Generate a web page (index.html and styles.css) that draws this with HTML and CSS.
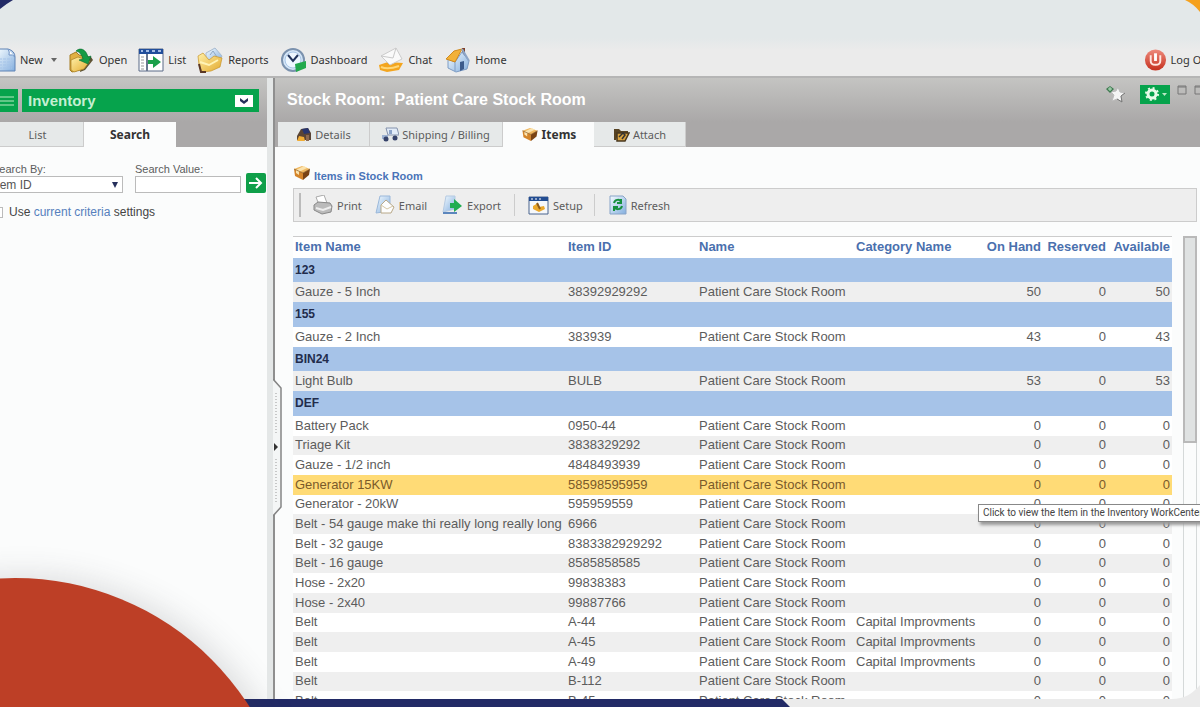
FILE: index.html
```html
<!DOCTYPE html>
<html lang="en">
<head>
<meta charset="utf-8">
<title>Inventory - Stock Room</title>
<link rel="stylesheet" href="styles.css">
</head>
<body>
<svg class="defs" width="0" height="0" aria-hidden="true">
  <defs>
    <linearGradient id="gold" x1="0" y1="0" x2="1" y2="1"><stop offset="0" stop-color="#fff0a8"/><stop offset="1" stop-color="#e3a92c"/></linearGradient>
    <linearGradient id="blue" x1="0" y1="0" x2="1" y2="1"><stop offset="0" stop-color="#f4fbff"/><stop offset="1" stop-color="#83aede"/></linearGradient>
    <linearGradient id="red" x1="0" y1="0" x2="0" y2="1"><stop offset="0" stop-color="#ee8a7c"/><stop offset="1" stop-color="#c52f1d"/></linearGradient>
    <symbol id="box" viewBox="0 0 18 16">
      <path d="M1 4 9 1l8 3-7 4z" fill="#f0b860"/><path d="M1 4l9 4v7L2 11z" fill="#d48429"/><path d="M17 4l-7 4v7l6-5z" fill="#7a4314"/>
      <path d="M11 1l3 2-8 4v3l-3-2V5z" fill="#fbe3ae"/><path d="M1 4l9 4 7-4" fill="none" stroke="#8a5a22" stroke-width=".7"/>
    </symbol>
  </defs>
</svg>
<div class="page">
  <header class="top">
    <nav class="menu">
      <button class="menu-new"><svg width="20" height="26" viewBox="0 0 20 26"><path d="M1 2h11q7 2 7 8v14H1z" fill="url(#blue)" stroke="#5f83b5"/><path d="M12 2q2 3 1 6 4-1 6 2" fill="#fff" stroke="#6f93c5"/><path d="M3 12h13M3 15h13M3 18h13M3 21h13" stroke="#a5c3e8" stroke-dasharray="3 1"/></svg>New<i class="caret"></i></button>
      <button class="wide"><svg width="25" height="26" viewBox="0 0 25 26"><path d="M13 8l9 2 2 3-8 10-5 2z" fill="#5d5335"/><path d="M1 8l6-3 3 3 4 1v13l-11 3-2-2z" fill="#e0b042" stroke="#a67d22"/><path d="M2 13l7-3 12 4-6 8-10 3-3-2z" fill="url(#gold)" stroke="#a67d22" stroke-width=".7"/><path d="M7 4c4-4 10-2 12 6l3-1-3 8-9-4 4-1c-1-4-3-7-7-8z" fill="#169b45" stroke="#0a6b30" stroke-width=".6"/></svg>Open</button>
      <button><svg width="26" height="26" viewBox="0 0 26 26"><path d="M1 2h24v22H1z" fill="#fff" stroke="#5b6a87"/><path d="M1 2h24v5H1z" fill="#214e9b"/><path d="M3 4h2m3 0h3m3 0h3m3 0h3" stroke="#cfe0fb" stroke-width="1.5"/><path d="M3 10h3m-3 3h3m-3 3h3m-3 3h3m-3 3h3" stroke="#999"/><path d="M9 7v17" stroke="#6b7890" stroke-width="2"/><path d="M10 13h5V9l8 6-8 6v-4h-5z" fill="#1ba04a"/></svg>List</button>
      <button class="wide"><svg width="26" height="26" viewBox="0 0 26 26"><path d="M9 6l9-5 7 8-3 7H9z" fill="url(#blue)" stroke="#a8bbd0"/><path d="M13 8l3-4 4 6" fill="none" stroke="#8fa7c4"/><path d="M1 9l5-3 6 7 5-4 8 2-2 9-9 4-9 1-3-7z" fill="url(#gold)" stroke="#c79429" stroke-width=".7"/><path d="M3 15l9 3 9-5" fill="none" stroke="#fff3b5" stroke-width="2"/><path d="M2 17l2 8h5" fill="none" stroke="#5b3826" stroke-width="2"/></svg>Reports</button>
      <button class="tight"><svg width="26" height="26" viewBox="0 0 26 26"><circle cx="12" cy="13" r="11" fill="#d5e6f8" stroke="#7b92ae" stroke-width="2"/><circle cx="12" cy="13" r="8" fill="#eef7ff" stroke="#a9c6e6"/><path d="M7 8l5 6 5-6" fill="none" stroke="#22345c" stroke-width="2"/><path d="M14 17l11-3v7l-10 4z" fill="#22a94d"/></svg>Dashboard</button>
      <button><svg width="26" height="26" viewBox="0 0 26 26"><path d="M1 18l9-3 15 1-4 7-12 2-7-2z" fill="#f3a51f"/><path d="M3 20q7 3 18-1" fill="none" stroke="#ffd777" stroke-width="2"/><path d="M3 9l15-8 6 11-12 6z" fill="#fafafa" stroke="#ccc"/><path d="M3 9l12 2 3-10" fill="none" stroke="#c9c9c9"/></svg>Chat</button>
      <button class="last wide"><svg width="25" height="26" viewBox="0 0 25 26"><path d="M17 1h3v8h-3z" fill="#7d3f29"/><path d="M3 12l7 3 7-10 7 9-2 8-11 3-8-4z" fill="url(#blue)" stroke="#7e9cc4"/><path d="M10 14v10" stroke="#7e9cc4"/><path d="M1 12L9 4l8-2-7 13z" fill="#f2b138" stroke="#d08a1e"/><path d="M17 2l7 12" stroke="#8da6c8" stroke-width="2"/><path d="M15 15l4-1v8l-4 2z" fill="#3b5a8b"/></svg>Home</button>
      <button class="logout"><svg width="23" height="24" viewBox="0 0 24 24"><circle cx="12" cy="12" r="11" fill="url(#red)"/><path d="M7 7v6q0 4 5 4t5-4V7" fill="none" stroke="#ffe6e0" stroke-width="2"/><path d="M12 5v8" stroke="#fff" stroke-width="3"/></svg>Log Out</button>
    </nav>
  </header>

  <main class="work">
    <aside class="side">
      <div class="side-head">
        <button class="burger" aria-label="Menu"><svg width="14" height="12" viewBox="0 0 14 12"><path d="M0 2h14M0 6h14M0 10h14" stroke="#7fd39b" stroke-width="1.5"/></svg></button>
        <button class="module">Inventory<svg width="18" height="12" viewBox="0 0 18 12"><path d="M0 0h18v12H0z" fill="#fff"/><path d="M5 3l4 3 4-3v3L9 9 5 6z" fill="#26305c"/></svg></button>
      </div>
      <div class="side-tabs"><button>List</button><button class="on">Search</button></div>
      <form class="search">
        <div class="field"><label for="by">Search By:</label><div class="pick"><select id="by"><option>Item ID</option></select><i></i></div></div>
        <div class="field value"><label for="val">Search Value:</label><input id="val" type="text"></div>
        <button type="button" class="go" aria-label="Search"><svg width="20" height="20" viewBox="0 0 20 20"><path d="M3 10h12M10 5l5 5-5 5" fill="none" stroke="#fff" stroke-width="2"/></svg></button>
        <div class="crit"><input id="crit" type="checkbox"><label for="crit">Use <a href="#">current criteria</a> settings</label></div>
      </form>
    </aside>

    <div class="split"><button class="grip" aria-label="Collapse panel"><svg width="10" height="138" viewBox="0 0 10 138"><path d="M0 0l8 9v119l-8 9z" fill="#f4f6f6"/><path d="M0 0l8 9v119l-8 9" fill="none" stroke="#858585" stroke-width="1.5"/><path d="M3 14v42M3 80v44" stroke="#999" stroke-dasharray="1 2"/><path d="M1 64l4 4-4 4z" fill="#333"/></svg></button></div>

    <section class="room">
      <div class="room-head">
        <h1>Stock Room:&nbsp; Patient Care Stock Room</h1>
        <div class="tools">
          <button aria-label="Add favourite"><svg width="22" height="18" viewBox="0 0 22 18"><path d="M13 2l2 5 5 1-4 3 1 6-5-3-5 2 2-6-3-3 5-1z" fill="#f4f4f4" stroke="#bbb"/><path d="M20 8l-4 3 1 6-5-3" fill="none" stroke="#777"/><path d="M1 4l4-3 4 3-4 4z" fill="#3f7a50"/><path d="M3 4h4M5 2v4" stroke="#b5e2c0"/></svg></button>
          <button class="gear" aria-label="Settings"><svg width="30" height="19" viewBox="0 0 30 19"><circle cx="12" cy="9" r="4" fill="none" stroke="#e8fbe9" stroke-width="3"/><circle cx="12" cy="9" r="6" fill="none" stroke="#e8fbe9" stroke-width="2" stroke-dasharray="2 2.7"/><path d="M22 8h5l-2.500 3z" fill="#b9e8c4"/></svg></button>
          <button aria-label="Restore"><svg width="10" height="10" viewBox="0 0 10 10"><path d="M1 1h8v8H1zM1 2h8" fill="none" stroke="#777"/></svg></button>
          <button aria-label="Maximize"><svg width="10" height="10" viewBox="0 0 10 10"><path d="M1 1h8v8H1zM1 2h8" fill="none" stroke="#777"/></svg></button>
        </div>
      </div>
      <div class="tabs">
        <button class="t1"><svg width="16" height="15" viewBox="0 0 16 15"><path d="M1 9l4-7 7-1 3 5v7H1z" fill="#594435"/><path d="M6 2l6-1 2 5-6 1z" fill="#27356f"/><path d="M1 14l2-5 5 1 1 4z" fill="#f1ad35"/><path d="M10 8h3v6h-3z" fill="#8c6951"/></svg>Details</button>
        <button class="t2"><svg width="17" height="15" viewBox="0 0 17 15"><path d="M4 1h11l2 7H6z" fill="#e2ecf8" stroke="#8492ac"/><path d="M0 8h6v4H0z" fill="#9db2d2"/><path d="M7 3h3v4H7z" fill="#8ba3c9"/><circle cx="4" cy="12" r="2.500" fill="#35426a"/><circle cx="13" cy="11" r="2.500" fill="#35426a"/></svg>Shipping / Billing</button>
        <button class="t3 on"><svg width="18" height="15"><use href="#box"/></svg>Items</button>
        <button class="t4"><svg width="17" height="15" viewBox="0 0 17 15"><path d="M1 2h5l2 2h7v3H5l-2 6H1z" fill="#574323"/><path d="M4 6h12l-4 8H4z" fill="#d9a340" stroke="#49381f" stroke-width="1.500"/><path d="M6 10l4-4 2 2-3 4" fill="none" stroke="#333" stroke-width="1.500"/></svg>Attach</button>
      </div>

      <div class="content">
        <h2><svg width="18" height="16"><use href="#box"/></svg><span>Items in Stock Room</span></h2>
        <div class="actions">
          <i class="bar first"></i>
          <button class="a1"><svg width="20" height="20" viewBox="0 0 20 20"><path d="M3 2l8-2 3 8-8 2z" fill="#fff" stroke="#aaa"/><path d="M1 10l4-3 12 1 2 3-1 6-9 2-8-4z" fill="#bbb" stroke="#888"/><path d="M3 13l7 2 8-3" fill="none" stroke="#eee" stroke-width="2"/></svg>Print</button>
          <button class="a2"><svg width="20" height="20" viewBox="0 0 20 20"><path d="M5 1h10v15l-14 2z" fill="url(#blue)" stroke="#9bb8da"/><path d="M6 10l5-5 8 7-3 6H6z" fill="#fdfdfd" stroke="#b8a888"/><path d="M6 10l6 4 6-3" fill="none" stroke="#d5c7a5"/></svg>Email</button>
          <button class="a3"><svg width="21" height="20" viewBox="0 0 21 20"><path d="M4 1h9v13l-12 3z" fill="url(#blue)" stroke="#b5cae2"/><path d="M1 18h14" stroke="#5c86bd" stroke-width="2"/><path d="M8 8h4V4l8 7-8 6v-4H8z" fill="#21ad51"/></svg>Export</button>
          <i class="bar"></i>
          <button class="a4"><svg width="21" height="19" viewBox="0 0 21 19"><path d="M1 1h19v17H1z" fill="#f6f8fb" stroke="#4a658e"/><path d="M1 1h19v4H1z" fill="#234d92"/><path d="M3 3h2m2 0h2m2 0h2" stroke="#fff"/><path d="M5 10l5-3 1 4 5-1 1 3-6 3-6-3z" fill="#eba82c"/><path d="M9 7l3 6" stroke="#8d5b18" stroke-width="2"/></svg>Setup</button>
          <i class="bar"></i>
          <button class="a5"><svg width="18" height="20" viewBox="0 0 18 20"><path d="M1 1h13l3 3v15H1z" fill="url(#blue)" stroke="#88a4c8"/><path d="M5 8c1-4 6-4 7-1m0-3v4H8M13 11c-1 4-6 4-8 1m0 4v-4h4" fill="none" stroke="#16903e" stroke-width="2"/></svg>Refresh</button>
        </div>

        <div class="list">
          <table>
            <colgroup><col><col class="c-id"><col class="c-name"><col class="c-cat"><col class="c-num"><col class="c-num"><col class="c-last"></colgroup>
            <thead><tr><th>Item Name</th><th>Item ID</th><th>Name</th><th>Category Name</th><th class="n">On Hand</th><th class="n">Reserved</th><th class="n">Available</th></tr></thead>
            <tbody>
              <tr class="g"><td colspan="7">123</td></tr>
              <tr class="alt"><td>Gauze - 5 Inch</td><td>38392929292</td><td>Patient Care Stock Room</td><td></td><td class="n">50</td><td class="n">0</td><td class="n">50</td></tr>
              <tr class="g"><td colspan="7">155</td></tr>
              <tr><td>Gauze - 2 Inch</td><td>383939</td><td>Patient Care Stock Room</td><td></td><td class="n">43</td><td class="n">0</td><td class="n">43</td></tr>
              <tr class="g"><td colspan="7">BIN24</td></tr>
              <tr class="alt"><td>Light Bulb</td><td>BULB</td><td>Patient Care Stock Room</td><td></td><td class="n">53</td><td class="n">0</td><td class="n">53</td></tr>
              <tr class="g"><td colspan="7">DEF</td></tr>
              <tr><td>Battery Pack</td><td>0950-44</td><td>Patient Care Stock Room</td><td></td><td class="n">0</td><td class="n">0</td><td class="n">0</td></tr>
              <tr class="alt"><td>Triage Kit</td><td>3838329292</td><td>Patient Care Stock Room</td><td></td><td class="n">0</td><td class="n">0</td><td class="n">0</td></tr>
              <tr><td>Gauze - 1/2 inch</td><td>4848493939</td><td>Patient Care Stock Room</td><td></td><td class="n">0</td><td class="n">0</td><td class="n">0</td></tr>
              <tr class="hot"><td>Generator 15KW</td><td>58598595959</td><td>Patient Care Stock Room</td><td></td><td class="n">0</td><td class="n">0</td><td class="n">0</td></tr>
              <tr><td>Generator - 20kW</td><td>595959559</td><td>Patient Care Stock Room</td><td></td><td class="n">0</td><td class="n">0</td><td class="n">0</td></tr>
              <tr class="alt"><td>Belt - 54 gauge make thi really long really long</td><td>6966</td><td>Patient Care Stock Room</td><td></td><td class="n">0</td><td class="n">0</td><td class="n">0</td></tr>
              <tr><td>Belt - 32 gauge</td><td>8383382929292</td><td>Patient Care Stock Room</td><td></td><td class="n">0</td><td class="n">0</td><td class="n">0</td></tr>
              <tr class="alt"><td>Belt - 16 gauge</td><td>8585858585</td><td>Patient Care Stock Room</td><td></td><td class="n">0</td><td class="n">0</td><td class="n">0</td></tr>
              <tr><td>Hose - 2x20</td><td>99838383</td><td>Patient Care Stock Room</td><td></td><td class="n">0</td><td class="n">0</td><td class="n">0</td></tr>
              <tr class="alt"><td>Hose - 2x40</td><td>99887766</td><td>Patient Care Stock Room</td><td></td><td class="n">0</td><td class="n">0</td><td class="n">0</td></tr>
              <tr><td>Belt</td><td>A-44</td><td>Patient Care Stock Room</td><td>Capital Improvments</td><td class="n">0</td><td class="n">0</td><td class="n">0</td></tr>
              <tr class="alt"><td>Belt</td><td>A-45</td><td>Patient Care Stock Room</td><td>Capital Improvments</td><td class="n">0</td><td class="n">0</td><td class="n">0</td></tr>
              <tr><td>Belt</td><td>A-49</td><td>Patient Care Stock Room</td><td>Capital Improvments</td><td class="n">0</td><td class="n">0</td><td class="n">0</td></tr>
              <tr class="alt"><td>Belt</td><td>B-112</td><td>Patient Care Stock Room</td><td></td><td class="n">0</td><td class="n">0</td><td class="n">0</td></tr>
              <tr><td>Belt</td><td>B-45</td><td>Patient Care Stock Room</td><td></td><td class="n">0</td><td class="n">0</td><td class="n">0</td></tr>
            </tbody>
          </table>
          <div class="scroll"><div class="thumb"></div></div>
        </div>
      </div>
      <div class="tip" role="tooltip">Click to view the Item in the Inventory WorkCenter</div>
      <svg class="fold" width="28" height="18" viewBox="0 0 28 18"><path d="M0 18c12 0 20-5 28-14v14z" fill="#ebebeb"/></svg>
    </section>
  </main>
  <footer class="foot"></footer>

  <svg class="corner left" width="14" height="10" viewBox="0 0 14 10"><path d="M0 0h13Q6 4 0 9z" fill="#222a66"/></svg>
  <svg class="corner right" width="15" height="13" viewBox="0 0 15 13"><path d="M0 0h15v12Q9 4 0 0z" fill="#f5a11e"/></svg>
  <div class="disc"></div>
</div>
</body>
</html>
```

FILE: styles.css
```css
* { box-sizing: border-box; }
body { margin: 0; font-family: "Liberation Sans", Arial, sans-serif; color: #5c5c5c; }
button { border: 0; padding: 0; margin: 0; background: none; font: inherit; color: inherit; }
button svg { flex: none; }
.defs { position: absolute; }
.page { position: relative; height: 100vh; overflow: hidden; display: flex; flex-direction: column; background: #fbfcfc; }

.top { flex: none; padding-top: 40px; background: linear-gradient(#e3e8e9 38px, #ebebeb 50px); border-bottom: 2px solid #b5b5b5; }
.menu { display: flex; height: 36px; align-items: center; gap: 11px; overflow: hidden; font: 11px "Noto Sans", sans-serif; color: #333; margin-right: -12px; padding-top: 3px; }
.menu button { display: flex; align-items: center; gap: 4px; white-space: nowrap; }
.menu .wide { gap: 5px; }
.menu .tight { gap: 3px; margin-left: 2px; }
.menu .last { margin-left: 2px; }
.menu .menu-new { margin-left: -4px; }
.caret { border: 3px solid transparent; border-top: 4px solid #666; border-bottom: 0; margin: 0 1px 0 4px; }
.menu .logout { margin-left: auto; }

.work { flex: 1; min-height: 0; display: flex; }
.side { flex: none; width: 267px; background: #fbfcfc; }
.side-head { display: flex; gap: 4px; height: 44px; padding: 11px 8px 10px 0; background: linear-gradient(#c4c4c2, #aaa8a8); }
.burger, .module { background: #06a34c; display: flex; align-items: center; }
.burger { width: 18px; padding-right: 6px; }
.module { flex: 1; justify-content: space-between; padding: 0 6px; font-size: 15px; font-weight: bold; color: #c5efd2; }
.side-tabs { display: flex; height: 25px; background: #aaa8a8; font: 11px "Noto Sans", sans-serif; }
.side-tabs button { width: 84px; padding-right: 8px; background: #e6e9e9; border-right: 1px solid #ccc; border-bottom: 1px solid #ccc; }
.side-tabs .on { width: 92px; padding: 0; background: #fbfcfc; border: 0; font-size: 12px; font-weight: bold; color: #333; }
.search { display: flex; flex-wrap: wrap; align-items: flex-end; gap: 11px 5px; margin-left: -8px; padding-top: 16px; }
.field { display: grid; width: 131px; font-size: 12px; }
.field.value { width: 106px; margin-left: 7px; }
.field label { line-height: 13px; font-size: 11px; }
.field select, .field input { width: 100%; height: 17px; border: 1px solid #bbb; background: #fff; font: 12px "Liberation Sans", Arial, sans-serif; color: #555; padding: 0; border-radius: 0; appearance: none; }
.pick { display: grid; }
.pick select, .pick i { grid-area: 1 / 1; }
.pick i { justify-self: end; align-self: center; margin-right: 5px; border: 3px solid transparent; border-top: 6px solid #26305c; border-bottom: 0; pointer-events: none; }
.go { width: 20px; height: 20px; background: #0f9f49; border-radius: 2px; display: flex; }
.crit { width: 100%; display: flex; align-items: center; gap: 6px; font-size: 12px; line-height: 16px; color: #444; }
.crit input { appearance: none; width: 11px; height: 11px; margin: 0; border: 1px solid #bbb; background: #fff; }
.crit a { color: #5680bd; text-decoration: none; }

.split { flex: none; width: 8px; position: relative; z-index: 1; background: #e4e7e7; border-right: 2px solid #8f8f8f; }
.grip { position: absolute; top: 301px; left: 6px; display: flex; }

.room { flex: 1; min-width: 0; position: relative; display: flex; flex-direction: column; overflow: hidden; }
.room-head { flex: none; height: 44px; display: flex; justify-content: space-between; padding-left: 12px; background: linear-gradient(#c4c4c2, #aaa8a8); }
.room h1 { margin: 0; font-size: 16px; line-height: 44px; color: #fff; white-space: nowrap; }
.tools { display: flex; align-items: flex-start; gap: 7px; padding-top: 7px; margin-right: -4px; }
.tools button { display: flex; }
.tools .gear { background: #06a34c; margin-left: 6px; }
.tabs { flex: none; height: 25px; display: flex; padding-left: 3px; background: #aaa8a8; font: 11px "Noto Sans", sans-serif; }
.tabs button { display: flex; align-items: center; justify-content: center; gap: 3px; background: #e6e9e9; border-right: 1px solid #ccc; border-bottom: 1px solid #ccc; white-space: nowrap; }
.tabs .on { background: #fbfcfc; border: 0; font-size: 12px; font-weight: bold; color: #333; }
.t1 { width: 92px; }
.t2 { width: 133px; }
.t3 { width: 91px; }
.t4 { width: 92px; }
.content { flex: 1; min-height: 0; display: flex; flex-direction: column; padding: 18px 3px 0 18px; }
.content h2 { flex: none; margin: 0; height: 23px; display: flex; gap: 3px; font-size: 11px; line-height: 22px; color: #4a74b8; }
.actions { flex: none; height: 34px; display: flex; align-items: center; border: 1px solid #ccc; background: #eee; font: 11px "Noto Sans", sans-serif; padding-left: 5px; }
.actions button { display: flex; align-items: center; gap: 4px; }
.bar { width: 1px; height: 22px; background: #ccc; }
.bar.first { width: 2px; height: 24px; background: #bbb; }
.a1 { margin: 0 13px 0 12px; }
.a2 { margin-right: 15px; }
.a3 { margin-right: 13px; }
.a4 { margin: 0 11px 0 13px; }
.a5 { margin-left: 14px; }

.list { flex: 1; min-height: 0; overflow: hidden; display: flex; align-items: flex-start; gap: 11px; margin-top: 14px; }
table { flex: 1; height: 475px; table-layout: fixed; border-collapse: collapse; border-top: 1px solid #ccc; font-size: 13px; line-height: 16px; background: #fff; }
th, td { height: 19px; padding: 0 2px; text-align: left; white-space: nowrap; }
th { height: 21px; color: #4a70ae; }
.n { text-align: right; }
.c-id { width: 131px; }
.c-name { width: 157px; }
.c-cat { width: 124px; }
.c-num { width: 65px; }
.c-last { width: 64px; }
.g td { height: 24px; background: #a6c3e8; color: #222c4c; font-weight: bold; font-size: 12px; }
.alt { background: #efefef; }
.hot { background: #ffdb76; color: #7a5a2a; }
.scroll { flex: none; align-self: stretch; width: 14px; border: 1px solid #d5d9d9; border-width: 0 1px; }
.thumb { height: 207px; margin: 0 -1px; background: #dfe2e2; border: 2px solid #b9b9b9; }

.tip { position: absolute; left: 703px; top: 426px; padding: 0 4px; border: 1px solid #888; background: #fff; box-shadow: 2px 3px 3px #999; font: 10px/16px Roboto, sans-serif; color: #444; white-space: nowrap; }
.fold { position: absolute; right: 0; bottom: 0; }
.foot { flex: none; height: 8px; background: #ebebeb; }
.foot::before { content: ""; display: block; width: 790px; height: 8px; background: #222a66; clip-path: polygon(0 0, 782px 0, 100% 100%, 0 100%); }

.corner { position: absolute; top: 0; }
.corner.left { left: 0; }
.corner.right { right: 0; }
.disc { position: absolute; border-radius: 50%; width: 556px; height: 556px; left: -263px; top: 578px; background: #bd3f26; box-shadow: 8px -4px 30px rgba(60, 60, 70, 0.15); }
```
